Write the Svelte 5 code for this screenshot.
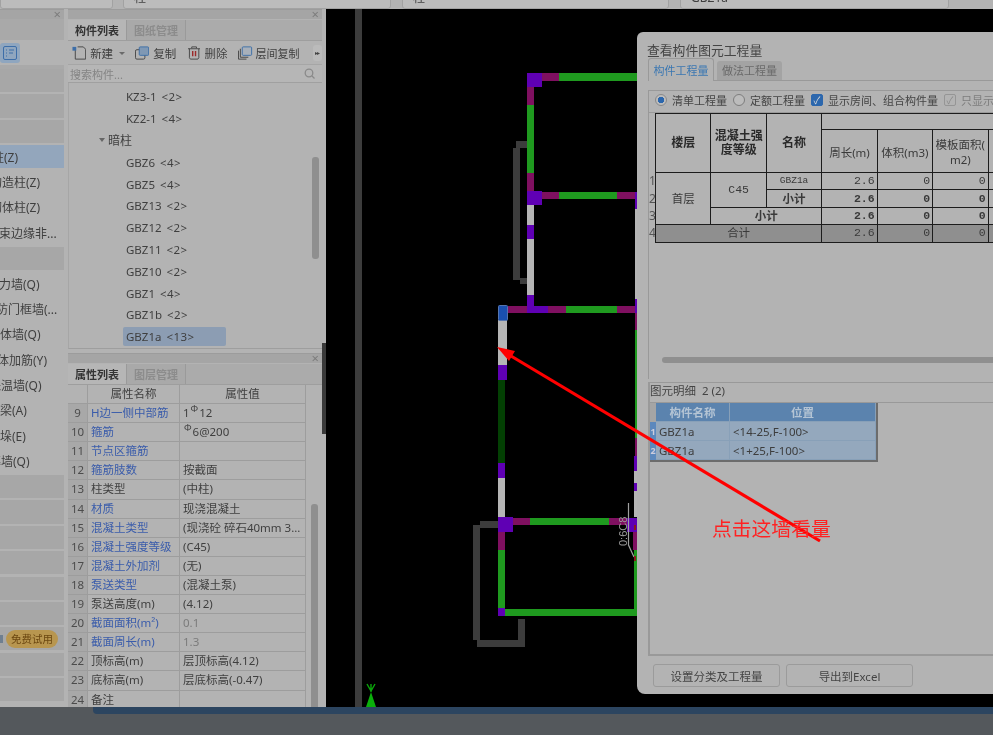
<script>
	const sideRows = [
		{ kind: 'cat' }, { kind: 'cat' }, { kind: 'cat' },
		{ kind: 'sel', text: '柱(Z)', x: -8 },
		{ text: '构造柱(Z)', x: -10 },
		{ text: '砌体柱(Z)', x: -10 },
		{ text: '约束边缘非...', x: -13 },
		{ kind: 'cat' },
		{ text: '剪力墙(Q)', x: -13 },
		{ text: '人防门框墙(...', x: -16 },
		{ text: '砌体墙(Q)', x: -12 },
		{ text: '砌体加筋(Y)', x: -15 },
		{ text: '保温墙(Q)', x: -11 },
		{ text: '暗梁(A)', x: -12 },
		{ text: '墙垛(E)', x: -12 },
		{ text: '幕墙(Q)', x: -11 },
		{ kind: 'cat' }, { kind: 'cat' }, { kind: 'cat' }, { kind: 'cat' }, { kind: 'cat' }, { kind: 'cat' },
		{ kind: 'cat', pill: true }, { kind: 'cat' }, { kind: 'cat' }
	];

	const tree = [
		{ text: 'KZ3-1', n: '<2>' },
		{ text: 'KZ2-1', n: '<4>' },
		{ text: '暗柱', group: true },
		{ text: 'GBZ6', n: '<4>' },
		{ text: 'GBZ5', n: '<4>' },
		{ text: 'GBZ13', n: '<2>' },
		{ text: 'GBZ12', n: '<2>' },
		{ text: 'GBZ11', n: '<2>' },
		{ text: 'GBZ10', n: '<2>' },
		{ text: 'GBZ1', n: '<4>' },
		{ text: 'GBZ1b', n: '<2>' },
		{ text: 'GBZ1a', n: '<13>', active: true }
	];

	const props = [
		{ no: 9, name: 'H边一侧中部筋', link: true, pre: '1', bar: '12' },
		{ no: 10, name: '箍筋', link: true, pre: '', bar: '6@200' },
		{ no: 11, name: '节点区箍筋', link: true, value: '' },
		{ no: 12, name: '箍筋肢数', link: true, value: '按截面' },
		{ no: 13, name: '柱类型', value: '(中柱)' },
		{ no: 14, name: '材质', link: true, value: '现浇混凝土' },
		{ no: 15, name: '混凝土类型', link: true, value: '(现浇砼 碎石40mm 3...' },
		{ no: 16, name: '混凝土强度等级', link: true, value: '(C45)' },
		{ no: 17, name: '混凝土外加剂', link: true, value: '(无)' },
		{ no: 18, name: '泵送类型', link: true, value: '(混凝土泵)' },
		{ no: 19, name: '泵送高度(m)', value: '(4.12)' },
		{ no: 20, name: '截面面积(m²)', link: true, value: '0.1', dim: true },
		{ no: 21, name: '截面周长(m)', link: true, value: '1.3', dim: true },
		{ no: 22, name: '顶标高(m)', value: '层顶标高(4.12)' },
		{ no: 23, name: '底标高(m)', value: '层底标高(-0.47)' },
		{ no: 24, name: '备注', value: '' }
	];

	// wall segments on the drawing, in page coordinates: x, y, w, h, colour
	const P = '#5f00b4', C = '#7f1060', G = '#1f9a1f', W = '#b5b5b5', D = '#034003', K = '#3c3c3c';
	const walls = [
		[527, 73, 15, 14, P], [542, 73, 17, 8, C], [559, 73, 78, 8, G],
		[527, 87, 7, 18, C], [527, 105, 7, 68, G], [527, 173, 7, 18, C],
		[527, 191, 15, 14, P], [542, 192, 17, 7, C], [559, 192, 58, 7, G], [617, 192, 18, 7, C], [635, 192, 2, 17, P],
		[527, 205, 7, 20, W], [527, 225, 7, 14, P], [527, 239, 7, 56, W], [527, 295, 7, 12, P],
		[508, 306, 19, 7, C], [527, 306, 21, 7, P], [548, 306, 18, 7, C], [566, 306, 51, 7, G], [617, 306, 18, 7, C],
		[635, 209, 2, 90, W], [635, 299, 2, 14, P], [635, 313, 2, 17, C], [635, 330, 2, 108, G],
		[635, 438, 2, 18, C], [634, 456, 3, 15, P], [634, 471, 3, 12, W], [634, 483, 3, 8, P], [634, 491, 3, 26, W],
		[498, 320, 9, 45, W], [498, 365, 9, 15, P], [498, 380, 7, 83, D], [498, 463, 7, 15, P], [498, 478, 7, 39, W],
		[498, 517, 15, 15, P], [513, 518, 17, 7, C], [530, 518, 79, 7, G], [609, 518, 18, 7, C], [627, 518, 10, 14, P],
		[498, 532, 7, 18, C], [498, 550, 7, 58, G], [498, 608, 7, 8, P], [505, 609, 132, 7, G],
		[633, 532, 4, 18, C], [634, 550, 3, 60, G],
		[355, 9, 7, 698, K],
		[516, 141, 11, 7, K], [513, 148, 7, 132, K], [520, 278, 7, 6, K],
		[480, 521, 18, 7, K], [473, 525, 7, 115, K], [477, 640, 41, 7, K], [518, 619, 7, 28, K]
	];

	const quantity = [
		{ no: 2, cells: ['2.6', '0', '0'], bold: true },
		{ no: 3, cells: ['2.6', '0', '0'], bold: true }
	];
</script>

<div class="app">
	<div class="topbar">
		<div class="combo c1"></div>
		<div class="combo c2">柱</div>
		<div class="combo c3">柱</div>
		<div class="combo c4">GBZ1a</div>
	</div>

	<div class="main">
		<aside class="side">
			<div class="pane-head"><span class="close">×</span></div>
			<div class="side-tabs"></div>
			<div class="side-tools">
				<span class="view-btn">
					<svg width="14" height="14" viewBox="0 0 14 14" fill="none" stroke="#3d6ea8">
						<rect x="0.5" y="0.5" width="13" height="13" rx="1.5" />
						<path d="M3 4h1M3 7h1M3 10h1M6 4h5M6 7h4" />
					</svg>
				</span>
			</div>
			<div class="side-list">
				{#each sideRows as row}
					<div class="side-row" class:cat={row.kind === 'cat'} class:sel={row.kind === 'sel'}>
						{#if row.text}<span style="margin-left: {row.x}px">{row.text}</span>{/if}
						{#if row.pill}<span class="lock"></span><span class="pill">免费试用</span>{/if}
					</div>
				{/each}
			</div>
		</aside>

		<section class="middle">
			<div class="pane-head"><span class="close">×</span></div>
			<div class="tabs">
				<span class="tab on">构件列表</span>
				<span class="tab">图纸管理</span>
			</div>
			<div class="tools">
				<svg class="ico" width="15" height="14" viewBox="0 0 15 14" fill="none" stroke="#444">
					<path d="M3.5 2.5V13.5H14.5V3L12 0.5H6" />
					<rect x="0.5" y="0.5" width="4" height="4" fill="#3d6ea8" stroke="none" />
				</svg>
				<span class="tool first">新建</span>
				<span class="caret"></span>
				<svg class="ico copy" width="15" height="14" viewBox="0 0 15 14" fill="none">
					<rect x="0.5" y="3.5" width="10" height="10" rx="1.5" stroke="#444" />
					<rect x="4.5" y="0.5" width="10" height="9" rx="1" fill="#7f98b4" stroke="#3d6ea8" />
				</svg>
				<span class="tool">复制</span>
				<svg class="ico del" width="13" height="14" viewBox="0 0 13 14" fill="none" stroke="#444">
					<path d="M0 2.5H13M4 2V0.5H9V2M1.5 2.5V12L2.5 13.5H10.5L11.5 12V2.5" />
					<path d="M5 5V10.5M8 5V10.5" stroke="#9c2a2a" stroke-width="1.5" />
				</svg>
				<span class="tool">删除</span>
				<svg class="ico layer" width="15" height="14" viewBox="0 0 15 14" fill="none">
					<path d="M0.5 4.5V13.5H9" stroke="#444" />
					<path d="M2.5 2.5V11.5H11" stroke="#444" />
					<rect x="4.5" y="0.5" width="10" height="9" rx="1" fill="#a8b0ba" stroke="#3d6ea8" />
				</svg>
				<span class="tool last">层间复制</span>
				<span class="more">▸▸</span>
			</div>
			<div class="search">
				<span>搜索构件...</span>
				<svg width="11" height="11" viewBox="0 0 11 11" fill="none" stroke="#8a8a8a" stroke-width="1.3">
					<circle cx="5" cy="5" r="3.8" /><path d="M8 8L10.5 10.5" />
				</svg>
			</div>
			<div class="tree">
				{#each tree as item}
					<div class="node" class:group={item.group}>
						{#if item.group}
							<span class="fold"></span>{item.text}
						{:else}
							<span class="label" class:active={item.active}>{item.text}<i>{item.n}</i></span>
						{/if}
					</div>
				{/each}
				<span class="thumb tree-thumb"></span>
			</div>

			<div class="pane-gap"></div>
			<div class="pane-head"><span class="close">×</span></div>
			<div class="tabs">
				<span class="tab on">属性列表</span>
				<span class="tab">图层管理</span>
			</div>
			<div class="props">
				<div class="prop head">
					<span class="no"></span>
					<span class="center">属性名称</span>
					<span class="center">属性值</span>
				</div>
				{#each props as p}
					<div class="prop">
						<span class="no">{p.no}</span>
						<span class:link={p.link}>{p.name}</span>
						<span class:dim={p.dim}>
							{#if p.bar}{p.pre}<sup>Φ</sup>{p.bar}{:else}{p.value}{/if}
						</span>
					</div>
				{/each}
				<span class="thumb props-thumb"></span>
			</div>
		</section>

		<div class="splitter"><span class="handle"></span></div>

		<main class="canvas">
			<svg class="drawing" width="667" height="698" viewBox="326 9 667 698">
				{#each walls as w}
					<rect x={w[0]} y={w[1]} width={w[2]} height={w[3]} fill={w[4]} />
				{/each}
				<rect x="498.5" y="305.5" width="9" height="15" rx="1" fill="#1a50b0" stroke="#5575b0" />
				<path d="M628.5 503V545L634 557" fill="none" stroke="#a0a0a0" stroke-width="1.2" />
				<text class="dim-text" transform="translate(627 546) rotate(-90)">0:6C8</text>
				<path d="M634 525h2v5h-2zM634 556h2v5h-2z" fill="#8a1a1a" />
				<path d="M371 684V692M367 684L371 691L375 684" fill="none" stroke="#0aa50a" stroke-width="1.4" />
				<path d="M371 692L376 707H366Z" fill="#0bb00b" />
			</svg>

			<div class="dialog">
				<div class="dlg-title">查看构件图元工程量</div>
				<div class="dlg-tabs">
					<span class="dlg-tab on">构件工程量</span>
					<span class="dlg-tab">做法工程量</span>
				</div>
				<div class="dlg-body">
					<div class="filters">
						<span class="radio on"></span><span class="opt">清单工程量</span>
						<span class="radio"></span><span class="opt">定额工程量</span>
						<span class="check on">✓</span><span class="opt">显示房间、组合构件量</span>
						<span class="check">✓</span><span class="opt off">只显示标准层单层量</span>
					</div>
					<table class="qty">
						<colgroup>
							<col class="c-no" /><col class="c" /><col class="c" /><col class="c" /><col class="c" /><col class="c" /><col class="c" /><col class="c" />
						</colgroup>
						<tbody>
							<tr class="h1">
								<td class="num" rowspan="2"></td>
								<th rowspan="2">楼层</th>
								<th rowspan="2">混凝土强度等级</th>
								<th rowspan="2">名称</th>
								<td colspan="4"></td>
							</tr>
							<tr class="h2">
								<td>周长(m)</td><td>体积(m3)</td><td>模板面积(<br />m2)</td><td></td>
							</tr>
							<tr>
								<td class="num">1</td>
								<td class="tc" rowspan="3">首层</td>
								<td class="tc mono" rowspan="2">C45</td>
								<td class="tc mono small">GBZ1a</td>
								<td class="tr mono">2.6</td><td class="tr mono">0</td><td class="tr mono">0</td><td></td>
							</tr>
							<tr class="b">
								<td class="num">2</td>
								<td class="tc">小计</td>
								{#each quantity[0].cells as c}<td class="tr mono">{c}</td>{/each}<td></td>
							</tr>
							<tr class="b">
								<td class="num">3</td>
								<td class="tc" colspan="2">小计</td>
								{#each quantity[1].cells as c}<td class="tr mono">{c}</td>{/each}<td></td>
							</tr>
							<tr class="sum">
								<td class="num">4</td>
								<td class="tc" colspan="3">合计</td>
								<td class="tr mono">2.6</td><td class="tr mono">0</td><td class="tr mono">0</td><td></td>
							</tr>
						</tbody>
					</table>
					<div class="hscroll"><span></span></div>
				</div>

				<div class="detail">
					<div class="detail-head">图元明细&nbsp; 2 (2)</div>
					<div class="grid">
						<div class="g-row g-head"><span class="g-no"></span><span>构件名称</span><span>位置</span></div>
						<div class="g-row"><span class="g-no">1</span><span class="g-l">GBZ1a</span><span class="g-l">&lt;14-25,F-100&gt;</span></div>
						<div class="g-row"><span class="g-no">2</span><span class="g-l">GBZ1a</span><span class="g-l">&lt;1+25,F-100&gt;</span></div>
					</div>
				</div>

				<div class="actions">
					<button>设置分类及工程量</button>
					<button>导出到Excel</button>
				</div>
			</div>

			<svg class="overlay" width="667" height="698" viewBox="326 9 667 698">
				<path d="M820 541L506 353" stroke="#f00" stroke-width="3.2" fill="none" />
				<path d="M497 347L515 351L509 361Z" fill="#f00" />
				<text class="note" x="712" y="536">点击这墙看量</text>
			</svg>
		</main>
	</div>

	<div class="status"><span class="strip"></span></div>
</div>

<style>
	:global(body) {
		overflow: hidden;
		background: #54585c;
	}

	.app {
		width: 993px;
		height: 735px;
		display: flex;
		flex-direction: column;
		overflow: hidden;
		background: #b3b3b3;
		color: #3f3f3f;
		font-family: "Noto Sans", "Noto Sans CJK SC", sans-serif;
		font-size: 12px;
		filter: blur(0.35px);
	}

	.topbar {
		height: 9px;
		flex: none;
		display: flex;
		align-items: flex-end;
		overflow: hidden;
		background: #b3b3b3;
	}

	.combo {
		flex: none;
		height: 24px;
		box-sizing: border-box;
		margin-right: 11px;
		padding: 4px 0 0 10px;
		border: 1px solid #a2a2a2;
		border-radius: 3px;
		background: #bcbcbc;
		font-size: 12px;
		line-height: 16px;
	}

	.c1 { width: 113px; margin-right: 10px; }
	.c2 { width: 268px; }
	.c3 { width: 267px; }
	.c4 { width: 269px; }

	.main {
		height: 698px;
		flex: none;
		display: flex;
	}

	.side {
		width: 64px;
		flex: none;
		margin-right: 4px;
		overflow: hidden;
		background: #b3b3b3;
	}

	.pane-head {
		height: 10px;
		position: relative;
		background: #a5a5a5;
		border-top: 1px solid #9c9c9c;
		box-sizing: border-box;
		flex: none;
	}

	.close {
		position: absolute;
		right: 3px;
		top: -3px;
		color: #7c7c7c;
		font-size: 13px;
		line-height: 14px;
	}

	.side-tabs {
		height: 21px;
		background: #a9a9a9;
	}

	.side-tools {
		height: 25px;
		display: flex;
		align-items: center;
		border-bottom: 4px solid #a9a9a9;
		box-sizing: content-box;
	}

	.view-btn {
		width: 20px;
		height: 20px;
		display: flex;
		align-items: center;
		justify-content: center;
		background: #8fa6bf;
		border-radius: 3px;
	}

	.side-list {
		display: flex;
		flex-direction: column;
		gap: 2.2px;
	}

	.side-row {
		height: 23.2px;
		flex: none;
		display: flex;
		align-items: center;
		white-space: nowrap;
		background: #b3b3b3;
	}

	.side-row.cat {
		background: #a7a7a7;
	}

	.side-row.sel {
		background: #93a6bc;
	}

	.lock {
		width: 3px;
		height: 8px;
		margin-right: 3px;
		background: #6f7f90;
	}

	.pill {
		padding: 0 5px;
		height: 18px;
		line-height: 18px;
		border-radius: 9px;
		background: #b8964f;
		color: #6b4710;
		font-size: 10.5px;
	}

	.middle {
		width: 254px;
		flex: none;
		display: flex;
		flex-direction: column;
		overflow: hidden;
	}

	.tabs {
		height: 21px;
		flex: none;
		margin-top: 1px;
		display: flex;
		background: #ababab;
		border-bottom: 1px solid #9e9e9e;
		box-sizing: border-box;
	}

	.tab {
		width: 59px;
		text-align: center;
		line-height: 21px;
		font-size: 11px;
		color: #8c8c8c;
		background: #a9a9a9;
		border-right: 1px solid #9a9a9a;
		box-sizing: border-box;
		font-weight: 700;
	}

	.tab.on {
		color: #333;
		background: #b6b6b6;
	}

	.tools {
		height: 24px;
		flex: none;
		display: flex;
		align-items: center;
		padding-left: 4px;
		background: #b3b3b3;
		border-bottom: 1px solid #a6a6a6;
		box-sizing: border-box;
	}

	.tool {
		margin-left: 4px;
		font-size: 11.5px;
		white-space: nowrap;
	}

	.tool.last {
		margin-left: 3px;
		font-size: 11px;
	}

	.caret {
		width: 0;
		height: 0;
		margin: 2px 0 0 6px;
		border: 3px solid transparent;
		border-top-color: #6a6a6a;
		border-bottom: 0;
	}

	.copy { margin-left: 10px; }
	.del { margin-left: 12px; }
	.layer { margin-left: 11px; }

	.more {
		margin-left: 13px;
		width: 10px;
		height: 16px;
		line-height: 16px;
		text-align: center;
		border-radius: 3px;
		background: #bbb;
		font-size: 6px;
		letter-spacing: -1px;
		color: #444;
	}

	.search {
		height: 18px;
		flex: none;
		display: flex;
		align-items: center;
		justify-content: space-between;
		padding: 0 7px 0 2px;
		background: #b6b6b6;
		border-bottom: 1px solid #a0a0a0;
		box-sizing: border-box;
		color: #858585;
		font-size: 11px;
	}

	.tree {
		height: 266px;
		flex: none;
		position: relative;
		padding-top: 3px;
		box-sizing: border-box;
		border-bottom: 1px solid #9e9e9e;
		border-left: 1px solid #a6a6a6;
	}

	.node {
		height: 21.8px;
		display: flex;
		align-items: center;
		padding-left: 56px;
		font-size: 11.5px;
		white-space: nowrap;
	}

	.node.group {
		padding-left: 30px;
		font-size: 12px;
	}

	.fold {
		width: 0;
		height: 0;
		margin-right: 3px;
		border: 3px solid transparent;
		border-top: 4px solid #666;
		border-bottom: 0;
	}

	.label {
		height: 19px;
		line-height: 19px;
		padding: 0 3px;
		margin-left: -2px;
		border-radius: 2px;
	}

	.label.active {
		width: 103px;
		box-sizing: border-box;
		background: #8c9db3;
	}

	.label i {
		font-style: normal;
		margin-left: 5px;
		letter-spacing: 0.4px;
	}

	.thumb {
		position: absolute;
		width: 7px;
		border-radius: 3px;
		background: #8f8f8f;
	}

	.tree-thumb {
		left: 243px;
		top: 74px;
		height: 102px;
	}

	.pane-gap {
		height: 4px;
		flex: none;
		background: #b3b3b3;
	}

	.props {
		flex: 1;
		position: relative;
		overflow: hidden;
	}

	.prop {
		display: grid;
		grid-template-columns: 20px 92px 126px;
		height: 19.1px;
		box-sizing: border-box;
		border-bottom: 1px solid #9d9d9d;
		width: 238px;
		line-height: 18px;
		white-space: nowrap;
	}

	.prop > span {
		padding-left: 3px;
		border-right: 1px solid #9d9d9d;
		overflow: hidden;
		font-size: 11.5px;
	}

	.prop .no {
		padding: 0;
		text-align: center;
		background: #a8a8a8;
		color: #4c4c4c;
	}

	.prop.head .no {
		background: #b3b3b3;
	}

	.prop > .center {
		text-align: center;
		padding: 0;
	}

	.prop .link {
		color: #3a5cab;
	}

	.prop .dim {
		color: #7b7b7b;
	}

	.prop sup {
		font-size: 9px;
		line-height: 0;
		margin: 0 1px;
	}

	.props-thumb {
		left: 243px;
		top: 119px;
		height: 220px;
	}

	.splitter {
		width: 4px;
		flex: none;
		position: relative;
		background: #b3b3b3;
	}

	.handle {
		position: absolute;
		left: 0;
		top: 334px;
		width: 4px;
		height: 91px;
		background: #3a3a3a;
	}

	.canvas {
		flex: 1;
		position: relative;
		overflow: hidden;
		background: #000;
	}

	.drawing,
	.overlay {
		position: absolute;
		left: 0;
		top: 0;
	}

	.overlay {
		pointer-events: none;
	}

	.dim-text {
		font-family: "Liberation Sans", sans-serif;
		font-size: 11px;
		fill: #989898;
	}

	.note {
		font-family: "Liberation Serif", "Noto Sans CJK SC", serif;
		font-size: 19.8px;
		fill: #f22;
	}

	.dialog {
		position: absolute;
		left: 311px;
		top: 23px;
		width: 380px;
		height: 662px;
		box-sizing: border-box;
		padding: 0 0 0 11px;
		border-radius: 6px 0 0 8px;
		background: #b3b3b3;
		display: flex;
		flex-direction: column;
	}

	.dlg-title {
		height: 26px;
		flex: none;
		padding-top: 8px;
		box-sizing: border-box;
		font-size: 12.8px;
		line-height: 20px;
		color: #454545;
		margin-left: -1px;
	}

	.dlg-tabs {
		height: 23px;
		flex: none;
		display: flex;
		align-items: flex-end;
		gap: 3px;
		border-bottom: 1px solid #999;
		box-sizing: border-box;
	}

	.dlg-tab {
		width: 65px;
		height: 19px;
		line-height: 19px;
		text-align: center;
		background: #a3a3a3;
		color: #6a6a6a;
		border-radius: 3px 3px 0 0;
		font-size: 11px;
	}

	.dlg-tab.on {
		width: 66px;
		height: 23px;
		line-height: 23px;
		margin-bottom: -1px;
		color: #3b77b2;
		background: #b3b3b3;
		border: 1px solid #999;
		border-bottom: 0;
		box-sizing: border-box;
	}

	.dlg-body {
		height: 289px;
		flex: none;
		margin-top: 9px;
		border-top: 1px solid #999;
		border-left: 1px solid #999;
		box-sizing: border-box;
		position: relative;
	}

	.filters {
		height: 17px;
		padding: 0 0 4px 6px;
		display: flex;
		align-items: center;
		white-space: nowrap;
		border-bottom: 1px solid #999;
		box-sizing: content-box;
	}

	.opt {
		margin: 0 6px 0 5px;
		font-size: 11px;
		color: #444;
	}

	.opt.off {
		color: #7d7d7d;
	}

	.radio {
		width: 12px;
		height: 12px;
		flex: none;
		box-sizing: border-box;
		border: 1px solid #7d7d7d;
		border-radius: 50%;
		background: #bcbcbc;
	}

	.radio.on {
		border-color: #8a8a8a;
		background: radial-gradient(circle, #2c67ad 0 3px, #bcbcbc 3.5px);
	}

	.check {
		width: 12px;
		height: 12px;
		flex: none;
		box-sizing: border-box;
		border: 1px solid #959595;
		border-radius: 2px;
		color: #8a8a8a;
		font-size: 10px;
		line-height: 10px;
		text-align: center;
	}

	.check.on {
		background: #2c67ad;
		border-color: #2c67ad;
		color: #ddd;
	}

	.qty {
		table-layout: fixed;
		border-collapse: collapse;
		width: 395px;
		font-size: 11.5px;
		line-height: 14px;
		color: #3a3a3a;
	}

	.c-no { width: 6.5px; }
	.c { width: 55.4px; }

	.qty th,
	.qty td {
		border: 1px solid #1c1c1c;
		padding: 0;
		overflow: hidden;
		white-space: nowrap;
	}

	.qty th {
		font-size: 12px;
		font-weight: 700;
		white-space: normal;
		line-height: 14px;
		color: #2a2a2a;
	}

	.qty tr { height: 17.4px; }
	.qty .h1 { height: 16px; }
	.qty .h2 { height: 43px; }

	.qty .h2 td {
		text-align: center;
		white-space: normal;
		line-height: 15px;
		padding-top: 2px;
	}

	.qty .num {
		border: 0;
		border-right: 1px solid #1c1c1c;
		font-size: 12px;
		color: #555;
		line-height: 12px;
	}

	.qty .tc { text-align: center; }

	.qty .tr {
		text-align: right;
		padding-right: 2px;
	}

	.mono {
		font-family: "Liberation Mono", "Noto Sans CJK SC", monospace;
		font-size: 11.5px;
	}

	.qty .small { font-size: 9.5px; }

	.qty .b td:not(.num) {
		font-weight: 700;
	}

	.qty .sum td {
		background: #8f8f8f;
	}

	.qty .sum .num {
		background: none;
	}

	.hscroll {
		position: absolute;
		left: 0;
		right: 0;
		top: 266px;
		height: 7px;
	}

	.hscroll span {
		display: block;
		margin-left: 13px;
		height: 6px;
		border-radius: 3px;
		background: #8f8f8f;
	}

	.detail {
		height: 274px;
		flex: none;
		margin-top: 3px;
		border-top: 1px solid #999;
		border-left: 2px solid #999;
		border-bottom: 2px solid #999;
		box-sizing: border-box;
	}

	.detail-head {
		height: 20px;
		line-height: 15px;
		font-size: 11.5px;
		border-bottom: 1px solid #999;
		box-sizing: border-box;
		color: #444;
	}

	.grid {
		width: 226px;
		border-right: 2px solid #6c6c6c;
		border-bottom: 2px solid #6c6c6c;
		background: #94a8bd;
	}

	.g-row {
		display: grid;
		grid-template-columns: 6px 74px 146px;
		height: 19px;
		line-height: 19px;
		font-size: 11.5px;
		white-space: nowrap;
		color: #3d3d3d;
	}

	.g-row span {
		text-align: center;
		border-right: 1px solid #88a0b8;
		border-bottom: 1px solid #88a0b8;
		overflow: hidden;
	}

	.g-row .g-l {
		text-align: left;
		padding-left: 3px;
	}

	.g-row .g-no {
		background: #5c88bd;
		color: #ccd;
		font-size: 9px;
		font-weight: 700;
		border: 0;
	}

	.g-head {
		background: #5b83ae;
		color: #b4c4d4;
		font-weight: 700;
	}

	.g-head .g-no {
		background: #a5a5a5;
	}

	.actions {
		display: flex;
		gap: 6px;
		padding: 8px 0 0 5px;
	}

	.actions button {
		width: 127px;
		height: 23px;
		padding: 0;
		border: 1px solid #9b9b9b;
		border-radius: 3px;
		background: #b3b3b3;
		font: inherit;
		font-size: 11.5px;
		color: #444;
	}

	.status {
		flex: 1;
		background: #54585c;
	}

	.strip {
		display: block;
		height: 7px;
		margin-left: 93px;
		border-radius: 0 0 0 4px;
		background: #2c4560;
	}
</style>
